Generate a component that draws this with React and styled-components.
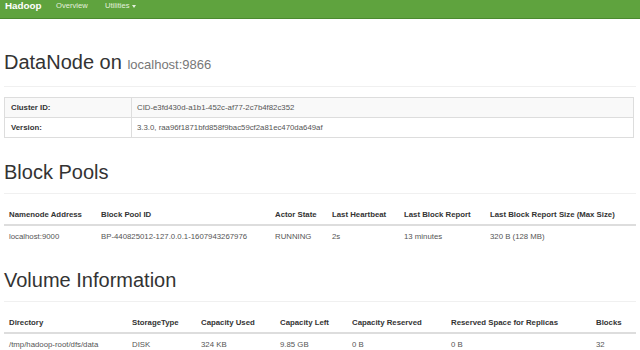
import React from 'react';
import styled, { createGlobalStyle } from 'styled-components';

const GlobalStyle = createGlobalStyle`
	html, body {
		margin: 0;
		padding: 0;
		background: #fff;
	}
	body {
		font-family: "Liberation Sans", Arial, sans-serif;
		font-size: 7.8px;
		line-height: 11px;
		color: #333;
	}
`;

const Navbar = styled.nav`
	display: flex;
	align-items: flex-start;
	height: 18px;
	padding: 0 5px;
	background-color: #5fa33e;
	border-bottom: 1px solid #4b8a2f;
`;

const Brand = styled.a`
	width: 51px;
	font-size: 9.8px;
	line-height: 12px;
	font-weight: bold;
	color: #fff;
	text-decoration: none;
`;

const NavLink = styled.a`
	width: ${(p) => p.$w}px;
	font-size: 7.6px;
	line-height: 12px;
	color: #e4f0de;
	text-decoration: none;
`;

const Caret = styled.span`
	display: inline-block;
	margin-left: 3px;
	vertical-align: middle;
	border-top: 3px solid #e4f0de;
	border-left: 2.5px solid transparent;
	border-right: 2.5px solid transparent;
`;

const Container = styled.main`
	padding: 0 4px;
`;

const PageHeader = styled.div`
	margin: ${(p) => (p.$first ? '32px' : '23px')} 0 10px;
	padding-bottom: 10px;
	border-bottom: 1px solid #f0f0f0;
`;

const Title = styled.h1`
	margin: 0;
	font-size: 20px;
	line-height: 22px;
	font-weight: normal;
	color: #333;

	& small {
		font-size: 13px;
		color: #777;
	}
`;

const Table = styled.table`
	width: ${(p) => (p.$narrow ? 'calc(100% - 2px)' : '100%')};
	table-layout: fixed;
	border-collapse: collapse;
	border-spacing: 0;
	border: ${(p) => (p.$bordered ? '1px solid #ddd' : 'none')};
`;

const Col = styled.col`
	width: ${(p) => (p.$w ? `${p.$w}px` : 'auto')};
`;

const InfoRow = styled.tr`
	background-color: ${(p) => (p.$striped ? '#f9f9f9' : '#fff')};
`;

const InfoKey = styled.th`
	padding: 4px 6px;
	text-align: left;
	font-weight: bold;
	border: 1px solid #ddd;
`;

const InfoValue = styled.td`
	padding: 4px 5px;
	border: 1px solid #ddd;
	color: #555;
`;

const HeadCell = styled.th`
	padding: 4.5px 5px;
	text-align: left;
	font-weight: bold;
	white-space: nowrap;
	border-bottom: 2px solid #ddd;
`;

const Cell = styled.td`
	padding: 4.5px 5px;
	white-space: nowrap;
	color: #555;
`;

const blockPoolCols = [
	['Namenode Address', 92],
	['Block Pool ID', 174],
	['Actor State', 57],
	['Last Heartbeat', 72],
	['Last Block Report', 86],
	['Last Block Report Size (Max Size)'],
];

const blockPoolRow = [
	'localhost:9000',
	'BP-440825012-127.0.0.1-1607943267976',
	'RUNNING',
	'2s',
	'13 minutes',
	'320 B (128 MB)',
];

const volumeCols = [
	['Directory', 123],
	['StorageType', 69],
	['Capacity Used', 79],
	['Capacity Left', 72],
	['Capacity Reserved', 99],
	['Reserved Space for Replicas', 145],
	['Blocks'],
];

const volumeRow = ['/tmp/hadoop-root/dfs/data', 'DISK', '324 KB', '9.85 GB', '0 B', '0 B', '32'];

const DataTable = ({ columns, row }) => (
	<Table>
		<colgroup>
			{columns.map(([name, w]) => (
				<Col key={name} $w={w} />
			))}
		</colgroup>
		<thead>
			<tr>
				{columns.map(([name]) => (
					<HeadCell key={name}>{name}</HeadCell>
				))}
			</tr>
		</thead>
		<tbody>
			<tr>
				{row.map((value, index) => (
					<Cell key={index}>{value}</Cell>
				))}
			</tr>
		</tbody>
	</Table>
);

const App = () => (
	<>
		<GlobalStyle />
		<Navbar>
			<Brand href="#">Hadoop</Brand>
			<NavLink $w={49} href="#">
				Overview
			</NavLink>
			<NavLink href="#">
				Utilities
				<Caret />
			</NavLink>
		</Navbar>
		<Container>
			<PageHeader $first>
				<Title>
					DataNode on <small>localhost:9866</small>
				</Title>
			</PageHeader>
			<Table $bordered $narrow>
				<colgroup>
					<Col $w={127} />
					<Col />
				</colgroup>
				<tbody>
					<InfoRow $striped>
						<InfoKey>Cluster ID:</InfoKey>
						<InfoValue>CID-e3fd430d-a1b1-452c-af77-2c7b4f82c352</InfoValue>
					</InfoRow>
					<InfoRow>
						<InfoKey>Version:</InfoKey>
						<InfoValue>3.3.0, raa96f1871bfd858f9bac59cf2a81ec470da649af</InfoValue>
					</InfoRow>
				</tbody>
			</Table>

			<PageHeader>
				<Title>Block Pools</Title>
			</PageHeader>
			<DataTable columns={blockPoolCols} row={blockPoolRow} />

			<PageHeader>
				<Title>Volume Information</Title>
			</PageHeader>
			<DataTable columns={volumeCols} row={volumeRow} />
		</Container>
	</>
);

export default App;
